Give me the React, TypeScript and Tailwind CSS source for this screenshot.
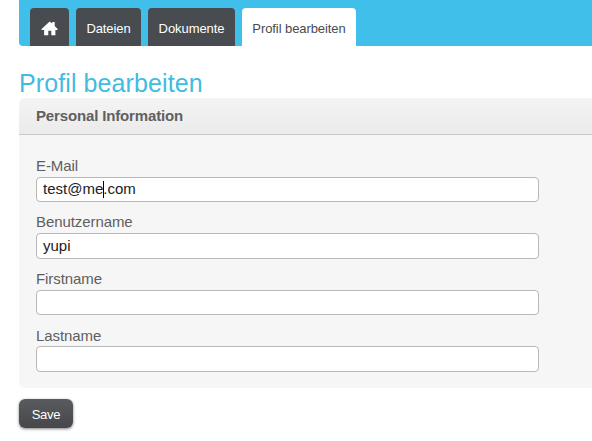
const tab = "flex h-[38px] items-center justify-center rounded-t-[4px] pt-[3px] text-[13px] tracking-[-0.08px] whitespace-nowrap";

const fields = [
  { label: "E-Mail", before: "test@me", after: ".com", caret: true, gap: "", labelHeight: "leading-[22px]", height: "h-[25px]" },
  { label: "Benutzername", before: "yupi", after: "", caret: false, gap: "mt-[9px]", labelHeight: "leading-[22px]", height: "h-[26px]" },
  { label: "Firstname", before: "", after: "", caret: false, gap: "mt-[9px]", labelHeight: "leading-[22px]", height: "h-[25px]" },
  { label: "Lastname", before: "", after: "", caret: false, gap: "mt-[9px]", labelHeight: "leading-[24px]", height: "h-[26px]" },
];

function HomeIcon() {
  return (
    <svg width="17" height="15" viewBox="0 0 17 15" fill="#fff" aria-hidden="true">
      <path d="M8.7 0.4 L11.2 2.6 V0.9 H13.7 V5 L16.9 8.3 L16.1 9.1 H14.4 V14.2 H10.3 V9.8 H7.3 V14.2 H3.1 V9.1 H1 L0.3 8.3 Z" />
    </svg>
  );
}

export default function App() {
  return (
    <div className="h-[441px] w-[592px] overflow-hidden bg-white pl-[19px] font-['Liberation_Sans',Arial,sans-serif]">
      <nav className="flex h-[46px] items-end gap-[7px] rounded-bl-[4px] bg-[#40bfea] pl-[11px]">
        <a className={`${tab} w-[39px] bg-[#484b4f]`}>
          <HomeIcon />
        </a>
        <a className={`${tab} w-[65px] bg-[#484b4f] text-white`}>Dateien</a>
        <a className={`${tab} w-[87px] bg-[#484b4f] text-white`}>Dokumente</a>
        <a className={`${tab} w-[114px] bg-white text-[#484b4f]`}>Profil bearbeiten</a>
      </nav>
      <h1 className="mt-[22px] h-[30px] text-[25px] leading-[31px] tracking-[0.1px] whitespace-nowrap text-[#40bcdf]">Profil bearbeiten</h1>
      <section className="h-[290px] rounded-l-[6px] bg-[#f6f6f6]">
        <h2 className="h-[37px] rounded-tl-[6px] border-b border-[#c8c8c8] bg-linear-to-b from-[#f4f4f4] to-[#ebebeb] pl-[17px] text-[15px] leading-[36px] font-bold tracking-[-0.15px] text-[#606060]">
          Personal Information
        </h2>
        <form className="flex flex-col pt-[20px] pl-[17px]">
          {fields.map((f) => (
            <label key={f.label} className={`flex flex-col ${f.gap}`}>
              <span className={`h-[22px] text-[15px] tracking-[-0.08px] text-[#5e5e5e] ${f.labelHeight}`}>{f.label}</span>
              <span className={`flex w-[503px] items-center rounded-[4px] border border-[#b8b8b8] bg-white pl-[6px] text-[15px] text-[#222] ${f.height}`}>
                {f.before}
                {f.caret && <span className="-mr-px h-[17px] w-px bg-black" />}
                {f.after}
              </span>
            </label>
          ))}
        </form>
      </section>
      <button className="mt-[11px] block h-[29px] w-[54px] rounded-[6px] bg-linear-to-b from-[#595b5f] to-[#45474b] pt-[2px] text-[13px] tracking-[-0.25px] text-white shadow-[0_1px_3px_rgba(0,0,0,0.5)]">
        Save
      </button>
    </div>
  );
}
